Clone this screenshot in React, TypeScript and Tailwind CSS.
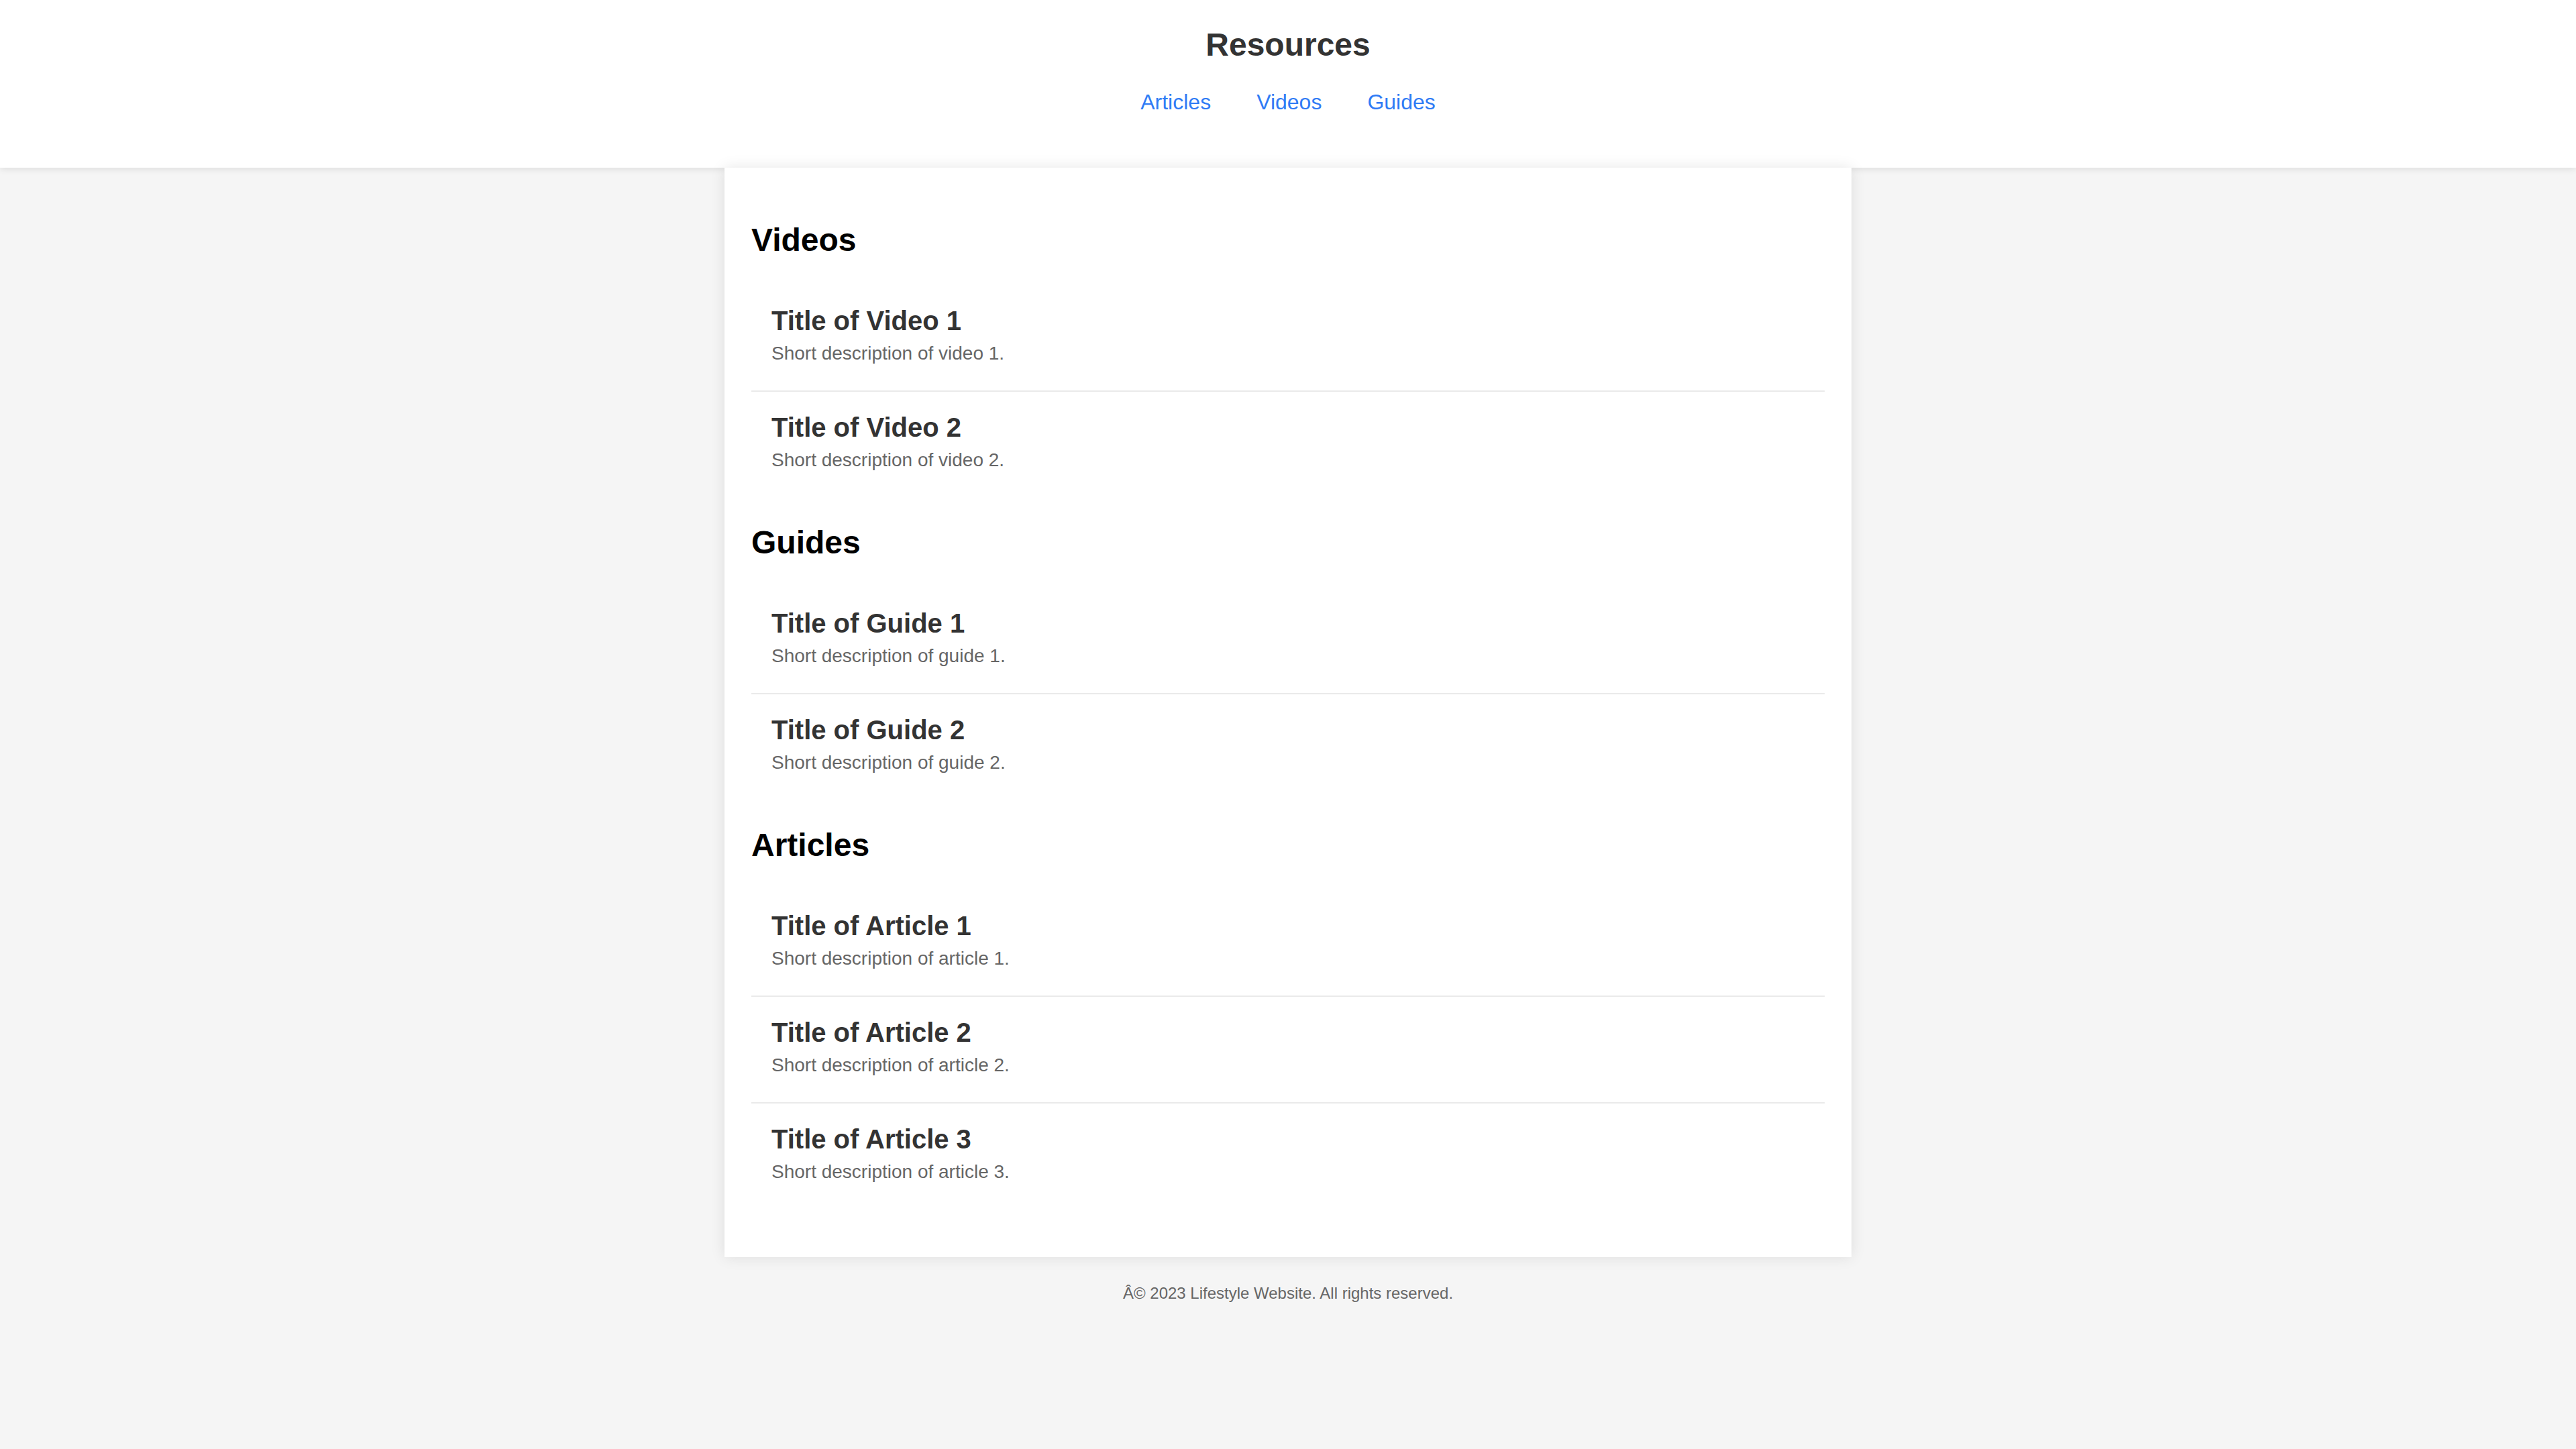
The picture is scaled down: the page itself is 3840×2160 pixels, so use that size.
import React from "react";

const nav = ["Articles", "Videos", "Guides"];

const sections = [
  {
    name: "Videos",
    items: [
      { title: "Title of Video 1", desc: "Short description of video 1." },
      { title: "Title of Video 2", desc: "Short description of video 2." },
    ],
  },
  {
    name: "Guides",
    items: [
      { title: "Title of Guide 1", desc: "Short description of guide 1." },
      { title: "Title of Guide 2", desc: "Short description of guide 2." },
    ],
  },
  {
    name: "Articles",
    items: [
      { title: "Title of Article 1", desc: "Short description of article 1." },
      { title: "Title of Article 2", desc: "Short description of article 2." },
      { title: "Title of Article 3", desc: "Short description of article 3." },
    ],
  },
];

export default function App() {
  return (
    <div className="min-h-screen bg-[#f5f5f5] font-['Liberation_Sans',Arial,sans-serif]">
      <header className="h-[250px] bg-white pt-[39px] text-center shadow-[0_2px_10px_rgba(0,0,0,0.1)]">
        <h1 className="text-[48px] leading-[55px] font-bold text-[#333]">
          Resources
        </h1>
        <nav className="mt-[40px] flex justify-center gap-[68px] text-[32px] leading-[37px]">
          {nav.map((link) => (
            <a key={link} href={`#${link.toLowerCase()}`} className="text-[#2f7bf5]">
              {link}
            </a>
          ))}
        </nav>
      </header>

      <main className="mx-auto flex w-[1680px] flex-col gap-[40px] bg-white px-[40px] pt-[80px] pb-[72px] shadow-[0_0_20px_rgba(0,0,0,0.1)]">
        {sections.map((section) => (
          <section key={section.name} id={section.name.toLowerCase()}>
            <h2 className="mb-[40px] text-[48px] leading-[55px] font-bold text-black">
              {section.name}
            </h2>
            {section.items.map((item, index) => (
              <div
                key={index}
                className={
                  index < section.items.length - 1
                    ? "border-b-2 border-[#eaeaea] pt-[30px] pb-[39px] pl-[30px]"
                    : "pt-[30px] pb-[39px] pl-[30px]"
                }
              >
                <h3 className="mb-[10px] text-[40px] leading-[46px] font-bold text-[#333]">
                  {item.title}
                </h3>
                <p className="text-[28px] leading-[32px] text-[#666]">{item.desc}</p>
              </div>
            ))}
          </section>
        ))}
      </main>

      <footer className="py-[40px] text-center text-[24px] leading-[28px] text-[#666]">
        Â© 2023 Lifestyle Website. All rights reserved.
      </footer>
    </div>
  );
}
